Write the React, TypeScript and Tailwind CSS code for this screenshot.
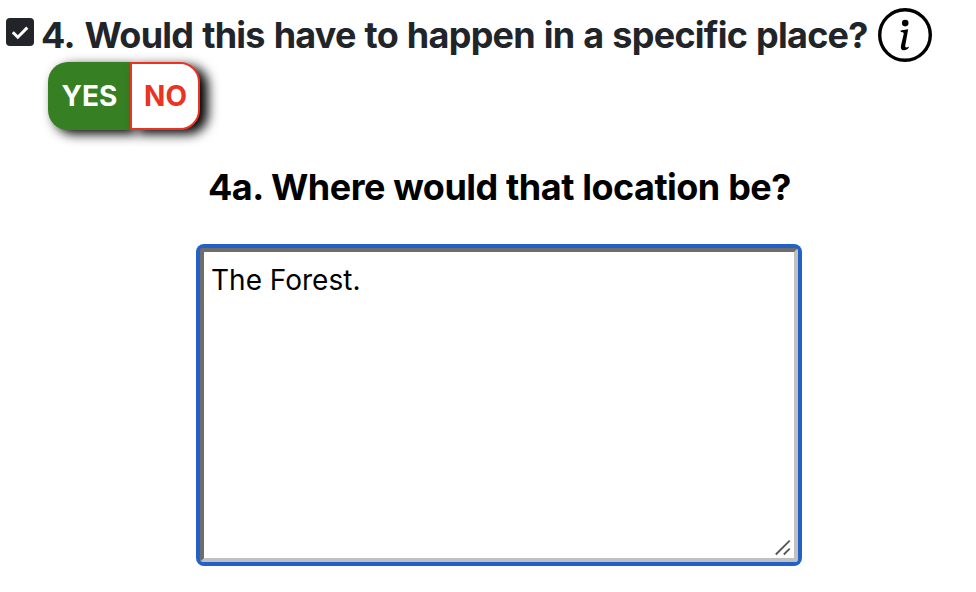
export default function App() {
  return (
    <main className="h-[592px] w-[976px] overflow-hidden bg-white font-['Inter',sans-serif]">
      <div className="flex h-[62px] items-start pl-[6px]">
        <svg className="mt-[18px] h-7 w-7 shrink-0" viewBox="0 0 28 28" fill="none">
          <rect width="28" height="28" rx="4" fill="#212529" />
          <path d="M6.8 14.2l5 5L21.3 9.6" stroke="#fff" strokeWidth="3" />
        </svg>
        <h1 className="ml-[7px] mt-[14px] w-[829px] whitespace-nowrap text-[36px] font-bold leading-[43px] tracking-[-0.75px] [word-spacing:1.1px] text-[#212529]"><span className="mr-[1px]">4.</span> Would this have to happen in a specific place?</h1>
        <svg className="ml-2 mt-2 h-[54px] w-[54px] shrink-0" viewBox="0 0 54 54" fill="none">
          <circle cx="27" cy="27" r="25.3" stroke="#000" strokeWidth="3.4" />
          <path d="M30.2 21.2L22.6 22.4v1.4l1.8.4c1.1.2 1.5.8 1.3 1.8L23.1 36.9c-.8 3.6.2 5.3 2.8 5.3 2 0 3.9-.9 4.8-2.4v-1.4c-.7.6-1.5 1-2.3 1-1 0-1.4-.8-1.1-2.1z" fill="#000" />
          <circle cx="27.2" cy="15.1" r="3.3" fill="#000" />
        </svg>
      </div>
      <div className="ml-12 flex h-[68px] w-[152px] rounded-[20px] text-[28px] font-bold tracking-[0.1px]">
        <button className="w-[82px] rounded-l-[20px] bg-[#368023] pl-px text-white shadow-[6px_4px_12px_#000]">YES</button>
        <button className="relative flex-1 rounded-r-[20px] border-2 border-[#ea3323] bg-white pl-px text-[#ea3323] shadow-[8px_4px_12px_#000]">NO</button>
      </div>
      <h2 className="ml-[208px] mt-[36px] whitespace-nowrap text-[36px] font-bold leading-[43px] tracking-[-0.52px] [word-spacing:0.4px] text-black">4a. Where would that location be?</h2>
      <div className="relative ml-[196px] mt-[35px] h-[322px] w-[606px] rounded-[8px] bg-[#2261c7] p-1">
        <textarea className="block h-full w-full resize-none rounded-[3px] border-4 border-b-[#c0c0c0] border-l-[#6d6d6d] border-r-[#c0c0c0] border-t-[#6d6d6d] bg-white px-[7px] py-[7px] text-[28px] leading-[42px] text-black outline-none" defaultValue="The Forest." />
        <svg className="absolute bottom-[10px] right-[11px] h-4 w-4" viewBox="0 0 16 16" fill="none">
          <path d="M.8 14.5L14.7.7M8.8 14.5l5.9-5.8" stroke="#555" strokeWidth="1.8" />
        </svg>
      </div>
    </main>
  );
}
